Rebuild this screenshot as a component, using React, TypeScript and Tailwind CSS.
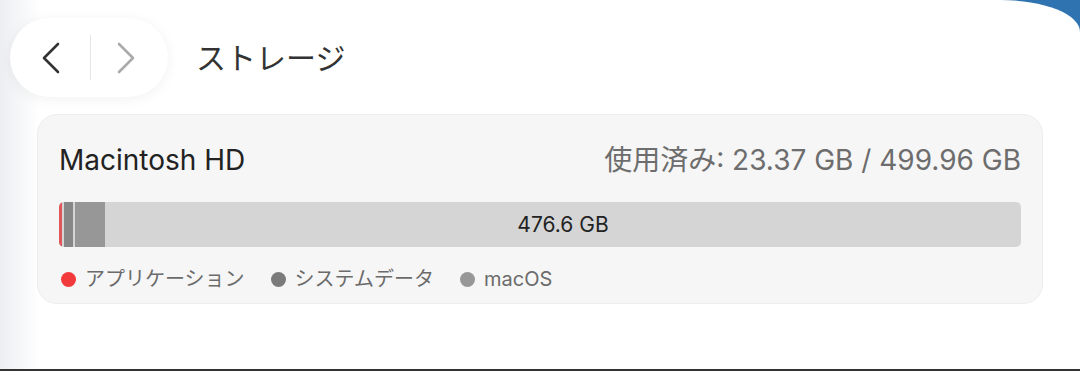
const font = "font-['Inter','Noto_Sans_CJK_JP',sans-serif]";

function NavPill() {
  return (
    <div className="flex h-[79px] w-[158px] items-center rounded-full bg-white shadow-[0_2px_14px_rgba(0,0,0,0.06)]">
      <div className="flex w-[80px] justify-center pl-[2px]">
        <svg width="20" height="32" viewBox="0 0 20 32" fill="none">
          <path d="M17 2 L3 16 L17 30" stroke="#333" strokeWidth="2.6" strokeLinecap="round" strokeLinejoin="round" />
        </svg>
      </div>
      <div className="h-[45px] w-px bg-[#e6e6e6]" />
      <div className="flex w-[77px] justify-center pr-[8px]">
        <svg width="20" height="32" viewBox="0 0 20 32" fill="none">
          <path d="M3 2 L17 16 L3 30" stroke="#aaa" strokeWidth="2.6" strokeLinecap="round" strokeLinejoin="round" />
        </svg>
      </div>
    </div>
  )
}

function Legend({ color, label }: { color: string; label: string }) {
  return (
    <div className="flex items-center gap-[9px]">
      <span className={`h-[15px] w-[15px] rounded-full ${color}`} />
      <span>{label}</span>
    </div>
  )
}

export default function App() {
  return (
    <div className={`relative flex h-[371px] w-full flex-col overflow-hidden bg-[#3073b1] ${font}`}>
      <div className="flex flex-1 flex-col rounded-tr-[80px_32px] border-b-2 border-[#333] bg-[linear-gradient(to_right,#eceef1,#ffffff_40px)]">
        {/* header */}
        <div className="flex items-center pl-[10px] pt-[18px]">
          <NavPill />
          <h1 className="ml-[28px] text-[30px] leading-none text-[#333]">ストレージ</h1>
        </div>

        {/* storage card */}
        <div className="mx-[37px] mt-[17px] h-[190px] rounded-[20px] border border-[#ededed] bg-[#f6f6f6] px-[21px] pt-[31px]">
          <div className="flex items-center justify-between text-[28px] leading-none">
            <span className="text-[#222]">Macintosh HD</span>
            <span className="text-[#6d6d6d]">使用済み: 23.37 GB / 499.96 GB</span>
          </div>

          <div className="mt-[28px] flex h-[45px] overflow-hidden rounded-[5px] bg-[#d5d5d5]">
            <div className="w-[3px] bg-[#e0575b]" />
            <div className="ml-[2px] w-[9px] bg-[#878787]" />
            <div className="ml-[2px] w-[30px] bg-[#979797]" />
            <div className="flex flex-1 items-center justify-center text-[21px] text-[#222]">476.6 GB</div>
          </div>

          <div className="mt-[17px] flex items-center gap-[26px] pl-[2px] text-[20px] text-[#6b6b6b]">
            <Legend color="bg-[#f23a3c]" label="アプリケーション" />
            <Legend color="bg-[#7b7b7b]" label="システムデータ" />
            <Legend color="bg-[#979797]" label="macOS" />
          </div>
        </div>
      </div>
    </div>
  )
}
